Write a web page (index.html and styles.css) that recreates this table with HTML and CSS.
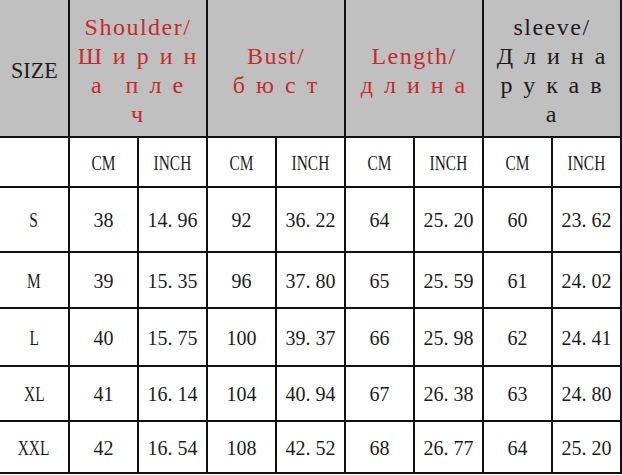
FILE: index.html
```html
<!DOCTYPE html>
<html lang="en">
<head>
<meta charset="utf-8">
<title>Size chart</title>
<link rel="stylesheet" href="styles.css">
</head>
<body>
<div class="chart">
  <div class="cell head"><span class="size">SIZE</span></div>
  <div class="cell head span2 red">
    <div class="lines"><span class="lat">Shoulder/</span><br><span class="cyr">Ширин</span><br><span class="cyr">а пле</span><br><span class="cyr">ч</span></div>
  </div>
  <div class="cell head span2 red">
    <div class="lines"><span class="lat">Bust/</span><br><span class="cyr">бюст</span></div>
  </div>
  <div class="cell head span2 red">
    <div class="lines"><span class="lat">Length/</span><br><span class="cyr">длина</span></div>
  </div>
  <div class="cell head span2">
    <div class="lines"><span class="lat">sleeve/</span><br><span class="cyr">Длина</span> <br><span class="cyr">рукав</span><br><span class="cyr">а</span></div>
  </div>

  <div class="cell"></div>
  <div class="cell"><span class="nar">CM</span></div>
  <div class="cell"><span class="nar">INCH</span></div>
  <div class="cell"><span class="nar">CM</span></div>
  <div class="cell"><span class="nar">INCH</span></div>
  <div class="cell"><span class="nar">CM</span></div>
  <div class="cell"><span class="nar">INCH</span></div>
  <div class="cell"><span class="nar">CM</span></div>
  <div class="cell"><span class="nar">INCH</span></div>

  <div class="cell"><span class="nar">S</span></div>
  <div class="cell">38</div>
  <div class="cell">14<span class="pt">.</span>96</div>
  <div class="cell">92</div>
  <div class="cell">36<span class="pt">.</span>22</div>
  <div class="cell">64</div>
  <div class="cell">25<span class="pt">.</span>20</div>
  <div class="cell">60</div>
  <div class="cell">23<span class="pt">.</span>62</div>

  <div class="cell"><span class="nar">M</span></div>
  <div class="cell">39</div>
  <div class="cell">15<span class="pt">.</span>35</div>
  <div class="cell">96</div>
  <div class="cell">37<span class="pt">.</span>80</div>
  <div class="cell">65</div>
  <div class="cell">25<span class="pt">.</span>59</div>
  <div class="cell">61</div>
  <div class="cell">24<span class="pt">.</span>02</div>

  <div class="cell"><span class="nar">L</span></div>
  <div class="cell">40</div>
  <div class="cell">15<span class="pt">.</span>75</div>
  <div class="cell">100</div>
  <div class="cell">39<span class="pt">.</span>37</div>
  <div class="cell">66</div>
  <div class="cell">25<span class="pt">.</span>98</div>
  <div class="cell">62</div>
  <div class="cell">24<span class="pt">.</span>41</div>

  <div class="cell"><span class="nar">XL</span></div>
  <div class="cell">41</div>
  <div class="cell">16<span class="pt">.</span>14</div>
  <div class="cell">104</div>
  <div class="cell">40<span class="pt">.</span>94</div>
  <div class="cell">67</div>
  <div class="cell">26<span class="pt">.</span>38</div>
  <div class="cell">63</div>
  <div class="cell">24<span class="pt">.</span>80</div>

  <div class="cell"><span class="nar">XXL</span></div>
  <div class="cell">42</div>
  <div class="cell">16<span class="pt">.</span>54</div>
  <div class="cell">108</div>
  <div class="cell">42<span class="pt">.</span>52</div>
  <div class="cell">68</div>
  <div class="cell">26<span class="pt">.</span>77</div>
  <div class="cell">64</div>
  <div class="cell">25<span class="pt">.</span>20</div>
</div>
</body>
</html>
```

FILE: styles.css
```css
html, body {
  margin: 0;
  padding: 0;
  background: #ffffff;
}

body {
  font-family: "Liberation Serif", "Times New Roman", serif;
  color: #1c1c1c;
}

.chart {
  display: grid;
  grid-template-columns: 68px repeat(8, 67px);
  grid-template-rows: 136px 48px 63px 54px 56px 53px 50px;
  gap: 2px;
  padding: 0 2px 2px 0;
  background: #111111;
  width: max-content;
}

.cell {
  background: #ffffff;
  display: flex;
  align-items: center;
  justify-content: center;
  text-align: center;
  font-size: 20px;
  padding-top: 2px;
  box-sizing: border-box;
}

.head {
  background: #c0c0c0;
  font-size: 24px;
  line-height: 29px;
  padding-top: 5px;
  color: #1c1c1c;
}

.span2 {
  grid-column: span 2;
}

.red {
  color: #c42c2c;
}

.lines {
  text-align: center;
}

.lat {
  letter-spacing: 1.5px;
}

.cyr {
  letter-spacing: 11px;
  word-spacing: -4px;
  margin-right: -9px;
}

.size {
  display: inline-block;
  transform: scaleX(0.92);
}

.nar {
  display: inline-block;
  transform: scaleX(0.77);
}

.pt {
  margin-right: 5px;
}
```
